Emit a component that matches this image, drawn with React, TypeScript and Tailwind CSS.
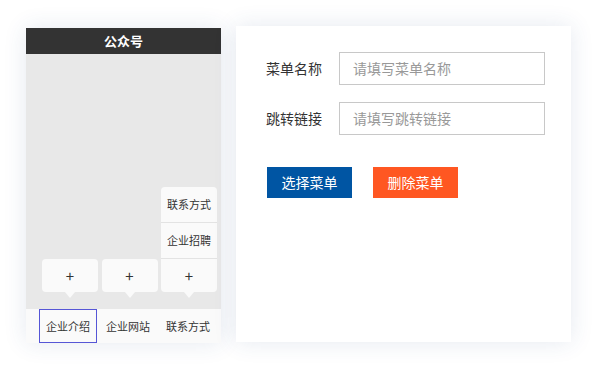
const menus = [
  { name: "企业介绍", subs: [] as string[] },
  { name: "企业网站", subs: [] as string[] },
  { name: "联系方式", subs: ["联系方式", "企业招聘"] },
];

function MenuColumn({ subs }: { subs: string[] }) {
  return (
    <div className="flex flex-col items-center">
      <div className="w-full rounded-[4px] bg-[#fafafa] overflow-hidden">
        {subs.map((s) => (
          <div key={s} className="h-[36px] flex items-center justify-center border-b border-[#e3e3e3] text-[11px] text-[#333]">
            {s}
          </div>
        ))}
        <div className="h-[33px] flex items-center justify-center text-[15px] text-[#333] leading-none">+</div>
      </div>
      <div className="w-0 h-0 border-x-[5px] border-x-transparent border-t-[6px] border-t-[#fafafa]" />
    </div>
  );
}

export default function App() {
  return (
    <div className="w-[597px] h-[370px] bg-white font-['Noto_Sans_CJK_SC',sans-serif] flex items-start gap-[15px] pl-[26px] pt-[26px]">
      {/* phone preview */}
      <div className="mt-[2px] w-[195px] h-[315px] flex flex-col shadow-[0_0_22px_rgba(40,70,130,0.12)]">
        <div className="h-[26px] bg-[#333] flex items-center justify-center text-white text-[13px] font-bold">公众号</div>
        <div className="flex-1 bg-[#e8e8e8] flex items-end pl-[16px] pr-[4px] pb-[11px]">
          <div className="grid grid-cols-3 gap-x-[3.5px] w-full items-end">
            {menus.map((m) => (
              <MenuColumn key={m.name} subs={m.subs} />
            ))}
          </div>
        </div>
        <div className="h-[34px] bg-[#fafafa] grid grid-cols-[58px_58px_58px] gap-x-[2px] pl-[13px]">
          {menus.map((m, i) => (
            <div
              key={m.name}
              className={
                "flex items-center justify-center text-[11px] text-[#333] " +
                (i === 0 ? "border border-[#5656d6]" : "")
              }
            >
              {m.name}
            </div>
          ))}
        </div>
      </div>

      {/* edit form */}
      <div className="w-[335px] h-[316px] bg-white shadow-[0_0_22px_rgba(40,70,130,0.12)] pl-[30px] pt-[26px]">
        <div className="flex flex-col gap-[17px]">
          <div className="flex items-center">
            <span className="w-[73px] text-[14px] text-[#333]">菜单名称</span>
            <div className="w-[206px] h-[33px] border border-[#c8c8c8] flex items-center pl-[13px] text-[14px] text-[#999]">请填写菜单名称</div>
          </div>
          <div className="flex items-center">
            <span className="w-[73px] text-[14px] text-[#333]">跳转链接</span>
            <div className="w-[206px] h-[33px] border border-[#c8c8c8] flex items-center pl-[13px] text-[14px] text-[#999]">请填写跳转链接</div>
          </div>
        </div>
        <div className="flex gap-[21px] mt-[32px] ml-[1px]">
          <button className="w-[85px] h-[31px] bg-[#0055a3] text-white text-[14px]">选择菜单</button>
          <button className="w-[85px] h-[31px] bg-[#ff5722] text-white text-[14px]">删除菜单</button>
        </div>
      </div>
    </div>
  );
}
